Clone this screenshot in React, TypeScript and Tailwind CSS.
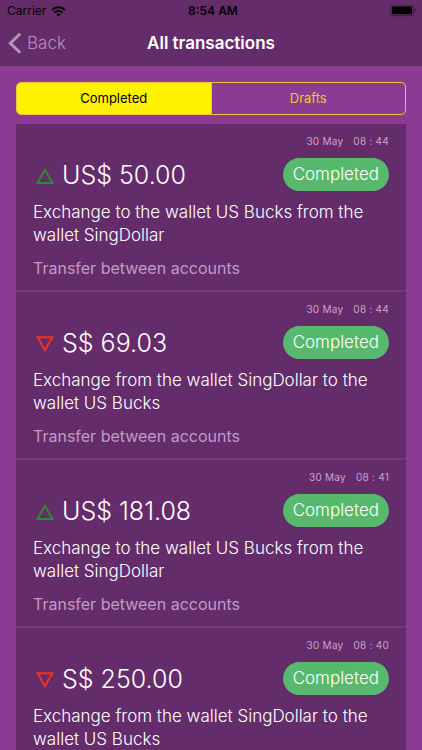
import { useState } from 'react';

type Direction = 'in' | 'out';

interface Transaction {
  id: number;
  direction: Direction;
  amount: string;
  date: string;
  time: string;
  description: string;
  category: string;
}

const TRANSACTIONS: Transaction[] = [
  {
    id: 1,
    direction: 'in',
    amount: 'US$ 50.00',
    date: '30 May',
    time: '08 : 44',
    description: 'Exchange to the wallet US Bucks from the wallet SingDollar',
    category: 'Transfer between accounts',
  },
  {
    id: 2,
    direction: 'out',
    amount: 'S$ 69.03',
    date: '30 May',
    time: '08 : 44',
    description: 'Exchange from the wallet SingDollar to the wallet US Bucks',
    category: 'Transfer between accounts',
  },
  {
    id: 3,
    direction: 'in',
    amount: 'US$ 181.08',
    date: '30 May',
    time: '08 : 41',
    description: 'Exchange to the wallet US Bucks from the wallet SingDollar',
    category: 'Transfer between accounts',
  },
  {
    id: 4,
    direction: 'out',
    amount: 'S$ 250.00',
    date: '30 May',
    time: '08 : 40',
    description: 'Exchange from the wallet SingDollar to the wallet US Bucks',
    category: 'Transfer between accounts',
  },
];

function StatusBar() {
  return (
    <div className="grid grid-cols-[1fr_auto_1fr] items-center h-[22px] px-[7px] text-xs leading-4 text-black">
      <div className="flex items-center gap-[5px]">
        <span>Carrier</span>
        <svg width="15" height="11" viewBox="0 0 15 11" fill="none" stroke="#000" strokeWidth="2" aria-hidden="true">
          <path d="M1 4.1C4.7 .4 10.3 .4 14 4.1" />
          <path d="M3.4 6.6C5.7 4.3 9.3 4.3 11.6 6.6" />
          <path d="M7.5 10.6L5.2 8.3C6.5 7.1 8.5 7.1 9.8 8.3Z" fill="#000" stroke="none" />
        </svg>
      </div>
      <span className="pl-1 text-center font-semibold">8:54 AM</span>
      <svg className="justify-self-end -mr-0.5" width="27" height="12" viewBox="0 0 27 12" aria-hidden="true">
        <rect x=".6" y=".1" width="22.8" height="10.6" rx="2.4" fill="none" stroke="#000" strokeOpacity=".45" />
        <rect x="2" y="1.5" width="20" height="7.8" rx="1.2" fill="#000" />
        <path d="M24.6 3.5v4c1.6-.6 1.6-3.4 0-4z" fill="#000" fillOpacity=".45" />
      </svg>
    </div>
  );
}

function DirectionIcon({ direction }: { direction: Direction }) {
  return direction === 'in' ? (
    <svg width="18" height="16" viewBox="0 0 18 16" fill="none" stroke="#2a8f26" strokeWidth="1.8" role="img" aria-label="Incoming">
      <path d="M9 1.9L16.6 15H1.4Z" />
    </svg>
  ) : (
    <svg width="18" height="16" viewBox="0 0 18 16" fill="none" stroke="#ee341a" strokeWidth="2" role="img" aria-label="Outgoing">
      <path d="M9 14.2L1.7 1.2H16.3Z" />
    </svg>
  );
}

function TransactionCard({ transaction }: { transaction: Transaction }) {
  return (
    <li className="bg-[#652c6b] border-b-2 border-[#78347e] px-[17px] py-[11px]">
      <p className="flex justify-end gap-[10px] text-[10px] leading-3 tracking-wide text-[#c8a3cc]">
        <span>{transaction.date}</span>
        <span>{transaction.time}</span>
      </p>

      <div className="flex items-center justify-between mt-[11px]">
        <div className="flex items-center gap-2 pl-[3px]">
          <span className="pt-[3px]">
            <DirectionIcon direction={transaction.direction} />
          </span>
          <span className="text-[25px] font-light leading-8">{transaction.amount}</span>
        </div>
        <span className="rounded-full bg-[#57b96d] px-[10px] text-[17px] font-light leading-[33px]">
          Completed
        </span>
      </div>

      <p className="mt-[10px] text-[17px] font-light leading-[23px]">{transaction.description}</p>
      <p className="mt-[10px] text-base leading-[22px] text-[#c19bc6]">{transaction.category}</p>
    </li>
  );
}

export default function App() {
  const [tab, setTab] = useState<'completed' | 'drafts'>('completed');

  const tabClass = (active: boolean) =>
    active
      ? 'flex-1 bg-[#fff200] text-black'
      : 'flex-1 text-[#f2c43c]';

  return (
    <div className="flex h-screen flex-col overflow-hidden bg-[#8b3b93] text-white font-[Inter,sans-serif]">
      {/* Header */}
      <header className="shrink-0 bg-[#652c6b]">
        <StatusBar />
        <div className="grid grid-cols-[1fr_auto_1fr] items-center h-11 px-2">
          <a href="#back" className="flex items-center gap-[5px] text-[17px] font-light text-[#b592b9]">
            <svg width="14" height="22" viewBox="0 0 14 22" fill="none" stroke="currentColor" strokeWidth="3" aria-hidden="true">
              <path d="M12.2 .6L2.4 10.2L12.2 19.8" />
            </svg>
            Back
          </a>
          <h1 className="text-[17px] font-semibold">All transactions</h1>
        </div>
      </header>

      <main className="flex min-h-0 flex-1 flex-col px-4 pt-4">
        {/* Tabs */}
        <div className="flex h-[33px] shrink-0 divide-x divide-[#f2c43c] overflow-hidden rounded-[5px] border border-[#f2c43c] text-[13px]">
          <button className={tabClass(tab === 'completed')} onClick={() => setTab('completed')}>
            Completed
          </button>
          <button className={tabClass(tab === 'drafts')} onClick={() => setTab('drafts')}>
            Drafts
          </button>
        </div>

        {/* Transactions */}
        <ul className="mt-[9px] min-h-0 flex-1 overflow-y-auto [scrollbar-width:none]">
          {tab === 'completed' &&
            TRANSACTIONS.map((transaction) => (
              <TransactionCard key={transaction.id} transaction={transaction} />
            ))}
        </ul>
      </main>
    </div>
  );
}
